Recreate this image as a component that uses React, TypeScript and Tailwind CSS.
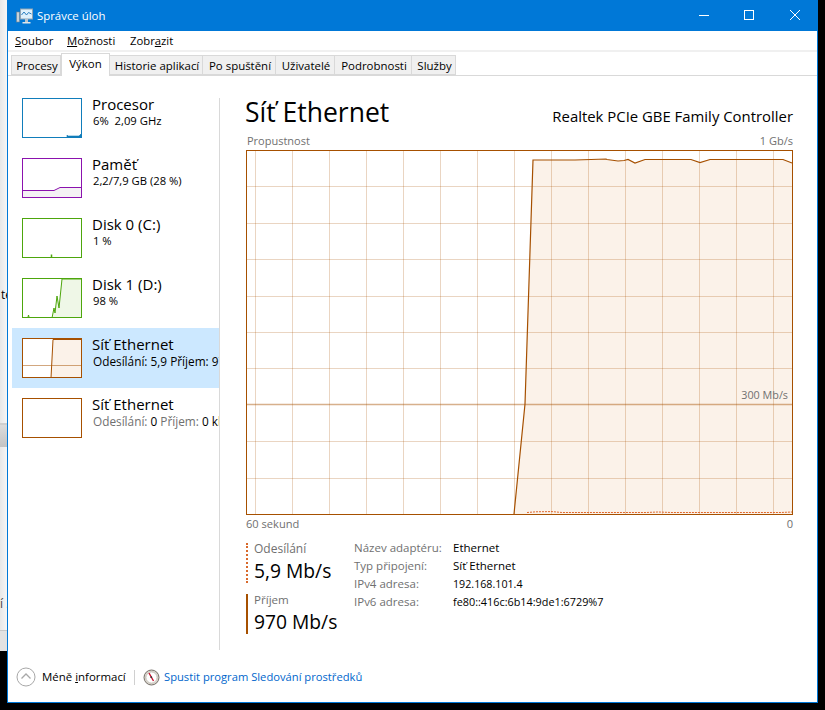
import React from 'react';

const tabs = [
  { name: 'Procesy', w: 'w-[50px]' },
  { name: 'Výkon', w: 'w-[49px]', active: true },
  { name: 'Historie aplikací', w: 'w-[93px]' },
  { name: 'Po spuštění', w: 'w-[73px]' },
  { name: 'Uživatelé', w: 'w-[59px]' },
  { name: 'Podrobnosti', w: 'w-[77px]' },
  { name: 'Služby', w: 'w-[44px]' },
];

function Thumb({ color, children }: { color: string; children?: React.ReactNode }) {
  return (
    <svg width="60" height="40" viewBox="0 0 60 40" className="mt-[10px] shrink-0 bg-white">
      {children}
      <rect x="0.5" y="0.5" width="59" height="39" fill="none" stroke={color} />
    </svg>
  );
}

function SideItem({
  title,
  sub,
  color,
  active,
  children,
}: {
  title: string;
  sub: React.ReactNode;
  color: string;
  active?: boolean;
  children?: React.ReactNode;
}) {
  return (
    <div className={`flex h-[60px] items-start gap-[10px] overflow-hidden pl-[10px] ${active ? 'bg-[#cce8ff]' : ''}`}>
      <Thumb color={color}>{children}</Thumb>
      <div className="mt-[6px] min-w-0 whitespace-nowrap">
        <div className="text-[15px] leading-[20px] text-black">{title}</div>
        <div className="pl-[1px] text-[11.25px] leading-[14px] text-black">{sub}</div>
      </div>
    </div>
  );
}

function BigChart() {
  const vs = [9, 46, 83, 120, 157, 194, 231, 268, 305, 342, 379, 416, 453, 490, 527];
  const hs = [36.4, 72.8, 109.2, 145.6, 182, 218.4, 291.2, 327.6];
  const top =
    '287,10 329,10 345,9.5 360,9 361,9.5 372,11 378,10.5 382,9.5 389,13 399,9.5 445,9.5 454,12.5 464,9.5 537,9.5 546,13';
  return (
    <svg width="547" height="365" viewBox="0 0 547 365" className="block">
      <polygon points={`268,364 279,254 ${top} 546,364`} fill="#fbf2e9" />
      {vs.map((x) => (
        <line key={x} x1={x + 0.5} y1="0" x2={x + 0.5} y2="365" stroke="#a65000" strokeOpacity="0.24" />
      ))}
      {hs.map((y) => (
        <line key={y} x1="0" y1={Math.round(y) + 0.5} x2="546" y2={Math.round(y) + 0.5} stroke="#a65000" strokeOpacity="0.24" />
      ))}
      <line x1="0" y1="254.5" x2="546" y2="254.5" stroke="#a65000" strokeOpacity="0.45" strokeWidth="1.5" />
      <polyline points={`268,364 279,254 ${top}`} fill="none" stroke="#a65000" strokeWidth="1.2" />
      <path
        d="M281 362.5 L290 361.8 L306 361.6 L316 362.5 L400 362.5 L412 362 L425 362.5 L535 362.5 L546 362"
        fill="none"
        stroke="#e0672b"
        strokeDasharray="2 1"
      />
      <rect x="0.5" y="0.5" width="546" height="364" fill="none" stroke="#a65000" />
    </svg>
  );
}

export default function App() {
  return (
    <div className="flex h-[710px] w-[825px] overflow-hidden bg-black font-['Open_Sans',sans-serif] text-black">
      {/* what shows of the window behind */}
      <div className="flex h-[651px] w-[7px] shrink-0 flex-col overflow-hidden bg-gradient-to-r from-[#e8e8e8] to-[#f6f6f6] text-[12px]">
        <div className="h-[288px]" />
        <div className="flex h-[14px] justify-start whitespace-nowrap pl-[1px] leading-[14px]">te</div>
        <div className="h-[121px]" />
        <div className="h-[2px] bg-[#cfcfcf]" />
        <div className="h-[22px] bg-gradient-to-b from-[#dcdcdc] to-[#c4c4c4]" />
        <div className="h-[150px]" />
        <div className="flex h-[14px] justify-start whitespace-nowrap leading-[14px] text-[#444]">í .</div>
        <div className="h-[19px]" />
        <div className="h-[1px] bg-[#c8c8c8]" />
        <div className="flex-1 bg-[#e2e2e2]" />
      </div>

      <div className="flex h-[703px] w-[811px] shrink-0 flex-col border border-[#0078d7] bg-white">
        {/* title bar */}
        <div className="flex h-[30px] shrink-0 items-center bg-[#0078d7] pl-[8px] text-white">
          <svg width="17" height="17" viewBox="0 0 17 17" className="shrink-0">
            <rect x="0.5" y="4" width="3" height="10" fill="#c9d3da" stroke="#6f8291" strokeWidth="0.6" />
            <rect x="4.5" y="1" width="12" height="10" fill="#dff1fb" stroke="#8fa3b2" />
            <path d="M5.5 7 L8 4 L10.5 7 L12.5 4.5 L15.5 6" fill="none" stroke="#2a7fc0" />
            <rect x="9" y="11" width="3" height="3" fill="#b8c4cc" />
            <rect x="6.5" y="14" width="8" height="1.5" fill="#dfe5e9" />
          </svg>
          <div className="ml-[4px] text-[11.4px] leading-[30px]">Správce úloh</div>
          <div className="flex-1" />
          <div className="flex h-[30px] w-[45px] items-center justify-center pb-[2px]">
            <svg width="10" height="10" viewBox="0 0 10 10"><path d="M0 5.5H10" stroke="#fff" /></svg>
          </div>
          <div className="flex h-[30px] w-[46px] items-center justify-center pb-[2px]">
            <svg width="10" height="10" viewBox="0 0 10 10"><rect x="0.5" y="0.5" width="9" height="9" fill="none" stroke="#fff" /></svg>
          </div>
          <div className="flex h-[30px] w-[45px] items-center justify-center pb-[2px]">
            <svg width="10" height="10" viewBox="0 0 10 10"><path d="M0 0L10 10M10 0L0 10" stroke="#fff" /></svg>
          </div>
        </div>

        {/* menu */}
        <div className="flex h-[19px] shrink-0 items-center pt-[1px] text-[11.3px] leading-[18px]">
          <span className="ml-[7px] w-[52px]"><u>S</u>oubor</span>
          <span className="w-[63px]"><u>M</u>ožnosti</span>
          <span>Zobr<u>a</u>zit</span>
        </div>
        <div className="h-[2px] shrink-0 bg-[#f0f0f0]" />

        {/* tabs */}
        <div className="flex h-[24px] shrink-0 items-end border-b border-[#d9d9d9] pl-[3px]">
          {tabs.map((t) =>
            t.active ? (
              <div key={t.name} className={`${t.w} -mb-[1px] flex h-[23px] items-start justify-center border border-b-0 border-[#d9d9d9] bg-white pt-[2px] text-[11.45px] leading-[16px]`}>
                {t.name}
              </div>
            ) : (
              <div key={t.name} className={`${t.w} flex h-[20px] items-center justify-center border-y border-r border-[#d9d9d9] bg-[#f0f0f0] pt-[1px] pl-[2px] text-[11.45px] first:border-l`}>
                {t.name}
              </div>
            ),
          )}
        </div>

        {/* body */}
        <div className="flex h-[574px] shrink-0">
          {/* sidebar */}
          <div className="ml-[4px] w-[207px] shrink-0 pt-[12px]">
            <SideItem title="Procesor" sub={<>6%&nbsp; 2,09 GHz</>} color="#117dbb">
              <path d="M45 39 L45 37 L46 38 L57 38 L59 36 L59 39 Z" fill="#117dbb" stroke="#117dbb" strokeWidth="0.6" />
            </SideItem>
            <SideItem title="Paměť" sub="2,2/7,9 GB (28 %)" color="#8b12ae">
              <path d="M0 32 L32 32 L38 29.5 L60 29.5 L60 40 L0 40 Z" fill="#f4f2f4" />
              <path d="M0 32.5 L32 32.5 L38 29.5 L60 29.5" fill="none" stroke="#8b12ae" />
            </SideItem>
            <SideItem title="Disk 0 (C:)" sub="1 %" color="#4da60c">
              <path d="M29.5 39 L29.5 36.5" stroke="#4da60c" strokeWidth="1.5" />
            </SideItem>
            <SideItem title="Disk 1 (D:)" sub="98 %" color="#4da60c">
              <path d="M30 40 L32 30 L33 35 L35 18 L37 30 L40 1 L60 1 L60 40 Z" fill="#eff7e7" />
              <path d="M6 39 L6.5 37 L7 39 M30 40 L32 30 L33 35 L35 18 L37 30 L40 1 L60 1" fill="none" stroke="#4da60c" />
            </SideItem>
            <SideItem
              title="Síť Ethernet"
              active
              color="#a65000"
              sub={<span className="text-[11.8px]">Odesílání: 5,9 Příjem: 970 Mb/s</span>}
            >
              <path d="M29 40 L31 2 L60 2 L60 40 Z" fill="#fbf2e9" />
              <path d="M0 27.5 H60" stroke="#a65000" strokeOpacity="0.5" />
              <path d="M29 40 L31 1.5 L60 1.5" fill="none" stroke="#a65000" />
            </SideItem>
            <SideItem
              title="Síť Ethernet"
              color="#a65000"
              sub={<span className="text-[11.8px]"><span className="text-[#707070]">Odesílání:</span> 0 <span className="text-[#707070]">Příjem:</span> 0 kb/s</span>}
            />
          </div>

          {/* detail pane */}
          <div className="mt-[22px] h-[552px] w-[1px] shrink-0 bg-[#d9d9d9]" />
          <div className="ml-[26px] w-[548px] shrink-0">
            <div className="flex h-[58px] items-start justify-between pt-[18px] pr-[1px]">
              <div className="-ml-[1px] text-[26.5px] leading-[36px]">Síť Ethernet</div>
              <div className="mt-[11px] text-[14.9px] leading-[22px]">Realtek PCIe GBE Family Controller</div>
            </div>
            <div className="flex h-[16px] items-center justify-between px-[1px] pb-[2px] text-[11px] leading-[14px] text-[#707070]">
              <span>Propustnost</span>
              <span>1 Gb/s</span>
            </div>
            <div className="relative">
              <BigChart />
              <div className="absolute right-[6px] top-[237px] text-[10.8px] leading-[16px] text-[#707070]">300 Mb/s</div>
            </div>
            <div className="flex h-[18px] w-[547px] items-center justify-between text-[11.1px] text-[#707070]">
              <span>60 sekund</span>
              <span>0</span>
            </div>
            <div className="mt-[10px] flex">
              <div className="w-[108px] shrink-0">
                <div className="h-[40px] border-l-2 border-dotted border-[#d8692b] pl-[6px]">
                  <div className="text-[12px] leading-[12px] text-[#707070]">Odesílání</div>
                  <div className="mt-[2px] text-[19.25px] leading-[28px]">5,9 Mb/s</div>
                </div>
                <div className="mt-[11px] h-[40px] border-l-2 border-[#a65000] pl-[6px]">
                  <div className="text-[11.6px] leading-[12px] text-[#707070]">Příjem</div>
                  <div className="mt-[2px] text-[19.25px] leading-[28px]">970 Mb/s</div>
                </div>
              </div>
              <div className="-mt-[4px] grid h-fit grid-cols-[99px_1fr] text-[11.5px] leading-[18px]">
                <span className="text-[#707070]">Název adaptéru:</span><span>Ethernet</span>
                <span className="text-[#707070]">Typ připojení:</span><span>Síť Ethernet</span>
                <span className="text-[#707070]">IPv4 adresa:</span><span className="text-[10.7px]">192.168.101.4</span>
                <span className="text-[#707070]">IPv6 adresa:</span><span className="text-[10.85px]">fe80::416c:6b14:9de1:6729%7</span>
              </div>
            </div>
          </div>
        </div>

        {/* footer */}
        <div className="flex flex-1 items-center pt-[2px] pl-[8px] text-[11.45px]">
          <svg width="20" height="20" viewBox="0 0 20 20" className="shrink-0">
            <circle cx="10" cy="10" r="9" fill="#fff" stroke="#a8a8a8" />
            <path d="M5.5 11.5 L10 7 L14.5 11.5" fill="none" stroke="#a8a8a8" strokeWidth="1.3" />
          </svg>
          <span className="ml-[6px] w-[92px]">Méně <u>i</u>nformací</span>
          <div className="h-[15px] w-[1px] bg-[#d0d0d0]" />
          <svg width="17" height="17" viewBox="0 0 17 17" className="ml-[8px] shrink-0">
            <circle cx="8.5" cy="8.5" r="7.5" fill="#d8d4cc" stroke="#77716a" />
            <circle cx="8.5" cy="8.5" r="5.5" fill="#fff" stroke="#b5b0a6" strokeWidth="0.6" />
            <path d="M6 4 L10.5 12" stroke="#c8102e" strokeWidth="1.4" />
            <circle cx="8.3" cy="8.2" r="0.9" fill="#333" />
          </svg>
          <span className="ml-[4px] text-[11.2px] text-[#0066cc]">Spustit program Sledování prostředků</span>
        </div>
      </div>
    </div>
  );
}
